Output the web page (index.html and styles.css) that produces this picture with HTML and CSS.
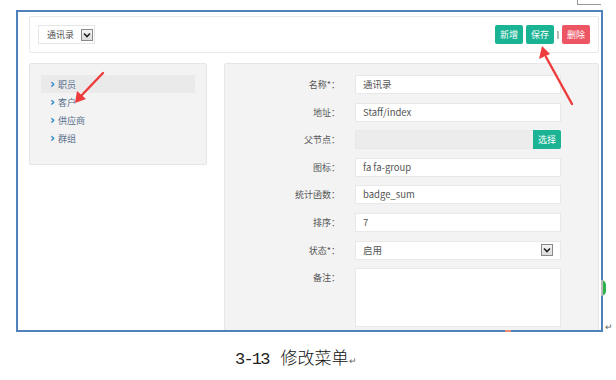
FILE: index.html
```html
<!DOCTYPE html>
<html lang="zh">
<head>
<meta charset="utf-8">
<link rel="stylesheet" href="styles.css">
<title>修改菜单</title>
</head>
<body>
<div class="corner"></div>
<div class="sheet">
<div id="frame">
  <div class="toolbar">
    <div class="pick">
      <span>通讯录</span>
      <span class="drop"><svg width="8" height="6" viewBox="0 0 8 6"><path d="M1 1.5 L4 4.5 L7 1.5" fill="none" stroke="#222" stroke-width="1.6"/></svg></span>
    </div>
    <div class="actions">
      <button class="btn ok">新增</button>
      <button class="btn ok">保存</button>
      <span class="sep"></span>
      <button class="btn danger">删除</button>
    </div>
  </div>
  <div class="main">
    <div class="tree">
      <ul>
        <li class="on"><i>&#8250;</i>职员</li>
        <li><i>&#8250;</i>客户</li>
        <li><i>&#8250;</i>供应商</li>
        <li><i>&#8250;</i>群组</li>
      </ul>
    </div>
    <div class="form">
      <label>名称*：</label><div class="field">通讯录</div>
      <label>地址：</label><div class="field">Staff/index</div>
      <label>父节点：</label><div class="field gray"><button class="btn ok pickbtn">选择</button></div>
      <label>图标：</label><div class="field">fa fa-group</div>
      <label>统计函数：</label><div class="field">badge_sum</div>
      <label>排序：</label><div class="field">7</div>
      <label>状态*：</label><div class="field">启用<span class="drop"><svg width="8" height="6" viewBox="0 0 8 6"><path d="M1 1.5 L4 4.5 L7 1.5" fill="none" stroke="#222" stroke-width="1.6"/></svg></span></div>
      <label>备注：</label><div class="field memo"></div>
    </div>
  </div>
</div>
<span class="ret">&#8629;</span>
<span class="blob"></span>
</div>
<p class="caption"><span class="num">3-13</span>修改菜单<span class="ret2">&#8629;</span></p>
<svg class="marks" width="616" height="340" viewBox="0 0 616 340">
  <path d="M103 73 L80 97" stroke="#ee3b3b" stroke-width="2.4" stroke-linecap="round"/>
  <path d="M75 103 L77 91 L86 99 Z" fill="#ee3b3b"/>
  <path d="M572 104 L546 57" stroke="#ee3b3b" stroke-width="2.4" stroke-linecap="round"/>
  <path d="M542 46 L539 59 L550 54 Z" fill="#ee3b3b"/>
  <rect x="505" y="330" width="6" height="2" fill="#f08a70"/>
</svg>
</body>
</html>
```

FILE: styles.css
```css
body {
  margin: 0;
  background: #fff;
  font-family: "Microsoft YaHei", "Noto Sans CJK SC", sans-serif;
  position: relative;
}
.corner {
  position: absolute;
  left: 577px;
  top: 0;
  width: 23px;
  height: 4px;
  border-left: 1px solid #999;
  border-bottom: 1px solid #999;
}
.sheet {
  position: relative;
  padding: 10px 0 0 16px;
}
#frame {
  width: 570px;
  height: 314px;
  border: 2px solid #4f81bd;
  padding: 4px 2px 0 11px;
  overflow: hidden;
  background: #fff;
}
.toolbar {
  height: 35px;
  border: 1px solid #e9e9e9;
  border-radius: 2px;
  display: flex;
  align-items: center;
  justify-content: space-between;
  padding: 0 8px 0 8px;
}
.pick {
  width: 47px;
  height: 17px;
  border: 1px solid #e6e6e6;
  display: flex;
  align-items: center;
  padding-left: 8px;
  font-size: 9px;
  color: #555;
  gap: 7px;
}
.drop {
  display: inline-flex;
  align-items: center;
  justify-content: center;
  width: 10px;
  height: 10px;
  border: 1px solid #8a8a8a;
  background: linear-gradient(#f4f4f4, #dcdcdc);
}
.actions {
  display: flex;
  align-items: center;
  gap: 3px;
}
.btn {
  border: 0;
  border-radius: 2px;
  height: 19px;
  width: 28px;
  padding: 0;
  font-family: inherit;
  font-size: 9px;
  color: #fff;
}
.ok { background: #1ab394; }
.danger { background: #ed5565; }
.sep {
  width: 2px;
  height: 8px;
  background: #bbb;
}
.main {
  display: flex;
  gap: 17px;
  margin-top: 10px;
  align-items: flex-start;
}
.tree {
  width: 154px;
  height: 89px;
  padding: 11px 11px 0 11px;
  background: #f3f3f3;
  border: 1px solid #e6e6e6;
  border-radius: 2px;
}
.tree ul {
  list-style: none;
  margin: 0;
  padding: 0;
}
.tree li {
  height: 18px;
  line-height: 18px;
  font-size: 9px;
  color: #58708a;
  padding-left: 9px;
}
.tree li.on { background: #eaeaea; }
.tree i {
  font-style: normal;
  font-weight: bold;
  color: #1c84c6;
  font-size: 12px;
  margin-right: 3px;
  font-family: "DejaVu Sans", sans-serif;
}
.form {
  flex: 1;
  height: 300px;
  background: #f3f3f3;
  border: 1px solid #e6e6e6;
  border-radius: 2px;
  display: grid;
  grid-template-columns: 115px 206px;
  column-gap: 15px;
  row-gap: 8.6px;
  padding-top: 11px;
  align-content: start;
}
.form label {
  text-align: right;
  font-size: 9px;
  color: #555;
  line-height: 19px;
}
.field {
  height: 17px;
  background: #fff;
  border: 1px solid #e8e8e8;
  font-size: 9.5px;
  color: #555;
  line-height: 17px;
  padding-left: 7px;
  display: flex;
  align-items: center;
  justify-content: space-between;
  padding-right: 7px;
}
.field.gray {
  background: #ececec;
  padding-right: 0;
  justify-content: flex-end;
}
.pickbtn {
  width: 28px;
  height: 19px;
  margin-right: -1px;
  border-radius: 0 2px 2px 0;
}
.field.memo { height: 57px; }
.ret {
  position: absolute;
  left: 605px;
  top: 320px;
  font-size: 9px;
  color: #666;
}
.blob {
  position: absolute;
  left: 601px;
  top: 280px;
  width: 5px;
  height: 16px;
  border-radius: 0 6px 6px 0;
  background: linear-gradient(90deg, #bbb 0 40%, #2bb24c 40%);
}
.caption {
  margin: 12px 0 0 235px;
  font-family: "Noto Sans CJK SC", sans-serif;
  font-size: 17px;
  font-weight: 300;
  color: #111;
}
.num {
  font-family: "Liberation Mono", monospace;
  font-size: 17px;
  letter-spacing: -1.8px;
  color: #222;
  margin-right: 12px;
}
.ret2 {
  font-size: 9px;
  color: #666;
}
.marks {
  position: absolute;
  left: 0;
  top: 0;
}
```
